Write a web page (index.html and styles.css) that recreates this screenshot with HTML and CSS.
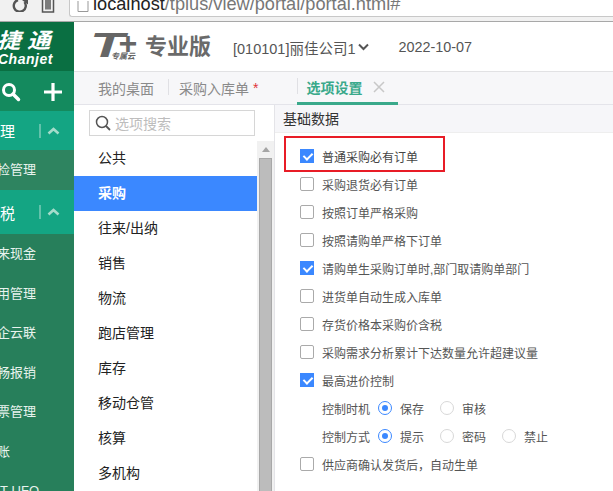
FILE: index.html
```html
<!DOCTYPE html>
<html lang="zh-CN">
<head>
    <meta charset="UTF-8">
    <title>T+ 选项设置</title>
    <link rel="stylesheet" href="styles.css">
</head>
<body>
    <div class="browser-bar">
        <svg class="reload-icon" width="16" height="12" viewBox="0 0 16 12"><path d="M12.500 -1.500 A6 6 0 1 1 6 -3.500" fill="none" stroke="#555" stroke-width="2.400" transform="translate(0 3.500)"/><path d="M10 0h6v4.500z" fill="#555"/></svg>
        <svg class="trash-icon" width="14" height="13" viewBox="0 0 14 13"><path d="M1.500 0v12h11V0M5 0v9.500M7 0v9.500M9 0v9.500" fill="none" stroke="#555" stroke-width="1.500"/></svg>
        <div class="url-box">
            <svg class="page-icon" width="12" height="11" viewBox="0 0 12 11"><path d="M1 0v10.500h10V0" fill="none" stroke="#999"/></svg>
            <span class="url-host">localhost</span><span class="url-path">/tplus/view/portal/portal.html#</span>
        </div>
    </div>
    <div class="app">
        <aside class="sidebar">
            <div class="brand">
                <div class="brand-cn">捷 通</div>
                <div class="brand-en">Chanjet</div>
            </div>
            <div class="tools">
                <svg width="20" height="20" viewBox="0 0 20 20"><circle cx="8" cy="8" r="5.500" fill="none" stroke="#fff" stroke-width="3"/><path d="M12 12l5.500 5.500" stroke="#fff" stroke-width="3.500" stroke-linecap="round"/></svg>
                <svg width="20" height="20" viewBox="0 0 20 20"><path d="M10 1v18M1 10h18" stroke="#fff" stroke-width="3.200"/></svg>
            </div>
            <div class="group group-first"><span class="group-name">理</span><span class="group-toggle"><svg width="13" height="8" viewBox="0 0 13 8"><path d="M1.500 6.500l5-4.500 5 4.500" fill="none" stroke="#a5dccb" stroke-width="2.600"/></svg></span></div>
            <div class="side-item side-item-dark">检管理</div>
            <div class="group"><span class="group-name">税</span><span class="group-toggle"><svg width="13" height="8" viewBox="0 0 13 8"><path d="M1.500 6.500l5-4.500 5 4.500" fill="none" stroke="#a5dccb" stroke-width="2.600"/></svg></span></div>
            <div class="side-item">来现金</div>
            <div class="side-item">用管理</div>
            <div class="side-item">企云联</div>
            <div class="side-item">畅报销</div>
            <div class="side-item">票管理</div>
            <div class="side-item">账</div>
            <div class="side-item side-item-last">T-UFO</div>
        </aside>
        <main class="main">
            <header class="top-bar">
                <div class="logo">
                    <span class="logo-t">T</span><span class="logo-plus">+</span>
                    <span class="logo-sub">专属云</span>
                </div>
                <span class="edition">专业版</span>
                <span class="company">[010101]丽佳公司1</span>
                <svg class="company-arrow" width="11" height="8" viewBox="0 0 11 8"><path d="M1 1.500l4.500 4.500 4.500-4.500" fill="none" stroke="#555" stroke-width="2"/></svg>
                <span class="date">2022-10-07</span>
            </header>
            <nav class="tabs">
                <span class="tab">我的桌面</span>
                <span class="tab tab-second">采购入库单 <em>*</em></span>
                <span class="tab tab-active">选项设置<svg width="12" height="12" viewBox="0 0 12 12"><path d="M1 1l10 10M11 1L1 11" stroke="#c8c8c8" stroke-width="1.500"/></svg></span>
            </nav>
            <div class="content">
                <section class="categories">
                    <div class="search-box">
                        <svg width="16" height="16" viewBox="0 0 16 16"><circle cx="7" cy="7" r="5.500" fill="none" stroke="#555" stroke-width="1.500"/><path d="M11 11l4 4" stroke="#555" stroke-width="1.800"/></svg>
                        <span>选项搜索</span>
                    </div>
                    <div class="category-wrap">
                        <ul class="category-list">
                            <li>公共</li>
                            <li class="active">采购</li>
                            <li>往来/出纳</li>
                            <li>销售</li>
                            <li>物流</li>
                            <li>跑店管理</li>
                            <li>库存</li>
                            <li>移动仓管</li>
                            <li>核算</li>
                            <li>多机构</li>
                        </ul>
                    </div>
                    <div class="scrollbar">
                        <div class="scroll-up"></div>
                        <div class="scroll-thumb"></div>
                    </div>
                </section>
                <section class="options">
                    <h2 class="options-title">基础数据</h2>
                    <div class="option-list">
                        <label class="option option-marked"><i class="check on"></i>普通采购必有订单</label>
                        <label class="option"><i class="check"></i>采购退货必有订单</label>
                        <label class="option"><i class="check"></i>按照订单严格采购</label>
                        <label class="option"><i class="check"></i>按照请购单严格下订单</label>
                        <label class="option"><i class="check on"></i>请购单生采购订单时,部门取请购单部门</label>
                        <label class="option"><i class="check"></i>进货单自动生成入库单</label>
                        <label class="option"><i class="check"></i>存货价格本采购价含税</label>
                        <label class="option"><i class="check"></i>采购需求分析累计下达数量允许超建议量</label>
                        <label class="option"><i class="check on"></i>最高进价控制</label>
                        <div class="option option-sub">
                            <span class="sub-label">控制时机</span>
                            <span class="radio on"></span><span class="radio-text">保存</span>
                            <span class="radio"></span><span class="radio-text">审核</span>
                        </div>
                        <div class="option option-sub">
                            <span class="sub-label">控制方式</span>
                            <span class="radio on"></span><span class="radio-text">提示</span>
                            <span class="radio"></span><span class="radio-text">密码</span>
                            <span class="radio"></span><span class="radio-text">禁止</span>
                        </div>
                        <label class="option"><i class="check"></i>供应商确认发货后，自动生单</label>
                    </div>
                </section>
            </div>
        </main>
    </div>
</body>
</html>
```

FILE: styles.css
```css
* {
    margin: 0;
    padding: 0;
    box-sizing: border-box;
}

html, body {
    height: 491px;
    overflow: hidden;
}

body {
    width: 613px;
    font-family: "Liberation Sans", "Noto Sans CJK SC", sans-serif;
    font-size: 12px;
    color: #333;
    background-color: white;
}

.browser-bar {
    height: 22px;
    display: flex;
    align-items: flex-start;
    background-color: #f1f1f1;
    border-bottom: 1px solid #a8a8a8;
    overflow: hidden;
}

.reload-icon {
    margin-left: 12px;
}

.trash-icon {
    margin-left: 13px;
}

.url-box {
    flex: 1;
    height: 17px;
    margin-left: 14px;
    display: flex;
    align-items: flex-end;
    background-color: white;
    border: 1px solid #c8c8c8;
    border-top: none;
    border-right: none;
    border-radius: 0 0 0 3px;
    font-size: 18.200px;
    line-height: 18px;
    padding-left: 7px;
    overflow: hidden;
}

.page-icon {
    margin-right: 4px;
    margin-bottom: 4px;
    flex-shrink: 0;
}

.url-host {
    color: #222;
    margin-bottom: 3px;
}

.url-path {
    color: #777;
    margin-bottom: 3px;
}

.app {
    display: flex;
    height: 469px;
}

.sidebar {
    width: 74px;
    flex-shrink: 0;
    background-color: #277f5b;
    color: #e8f3ee;
    overflow: hidden;
}

.brand {
    height: 49px;
    background-color: #0a6f42;
    color: white;
    font-style: italic;
    font-weight: bold;
    white-space: nowrap;
    padding-top: 8px;
}

.brand-cn {
    font-size: 21px;
    line-height: 22px;
    margin-left: -3px;
    transform: scaleX(1.120);
    transform-origin: left;
}

.brand-en {
    font-size: 14px;
    line-height: 14px;
    letter-spacing: 0.500px;
    margin-left: -2px;
}

.tools {
    height: 40px;
    background-color: #148a5e;
    display: flex;
    align-items: center;
    gap: 22px;
    padding-top: 2px;
}

.tools svg:first-child {
    margin-left: 1px;
}

.group {
    height: 44px;
    background-color: #14a583;
    color: white;
    display: flex;
    align-items: center;
    font-size: 15px;
}

.group-first {
    height: 39px;
}

.group-name {
    width: 39px;
    white-space: nowrap;
}

.group-toggle {
    display: flex;
    align-items: center;
    height: 14px;
    padding-left: 6px;
    border-left: 2px solid #62c2ab;
}

.side-item {
    height: 39.500px;
    line-height: 39px;
    white-space: nowrap;
    font-size: 13px;
    text-indent: -3px;
}

.side-item-dark {
    height: 40px;
    line-height: 40px;
    background-color: #2e8460;
}

.side-item-last {
    text-indent: 0;
}

.main {
    flex: 1;
    min-width: 0;
    display: flex;
    flex-direction: column;
}

.top-bar {
    height: 50px;
    flex-shrink: 0;
    display: flex;
    align-items: center;
    padding-left: 20px;
    border-bottom: 1px solid #e2e2e4;
    color: #555;
    white-space: nowrap;
}

.logo {
    width: 51px;
    height: 30px;
    position: relative;
    color: #666;
    font-weight: bold;
    font-style: italic;
}

.logo-t {
    position: absolute;
    left: -4px;
    top: -4px;
    font-size: 35px;
    line-height: 34px;
    transform: scaleX(1.600);
    transform-origin: left;
}

.logo-plus {
    position: absolute;
    left: 24px;
    top: -5px;
    font-size: 32px;
    line-height: 32px;
}

.logo-sub {
    position: absolute;
    left: 17px;
    top: 20px;
    font-size: 8px;
    line-height: 9px;
}

.edition {
    font-size: 22px;
    line-height: 26px;
    font-weight: bold;
    color: #6a6a6a;
    width: 88px;
}

.company {
    font-size: 14.500px;
    margin-top: 1px;
}

.company-arrow {
    margin-left: 2px;
    margin-top: 1px;
}

.date {
    font-size: 14.400px;
    margin-left: 30px;
    margin-top: 1px;
}

.tabs {
    height: 33px;
    flex-shrink: 0;
    display: flex;
    align-items: stretch;
    background-color: #f7f7f9;
    border-bottom: 1px solid #e4e4ea;
    padding-left: 24px;
    color: #8a8a8a;
    white-space: nowrap;
    font-size: 14px;
}

.tab {
    display: flex;
    align-items: center;
    gap: 4px;
}

.tab-second {
    margin-left: 14px;
    padding-left: 11px;
    position: relative;
}

.tab em {
    color: #e0343a;
    font-style: normal;
}

.tab-second::before {
    content: "";
    position: absolute;
    left: 0;
    top: 7px;
    height: 16px;
    border-left: 1px solid #e0e0e4;
}

.tab-active {
    margin-left: 39px;
    width: 101px;
    padding-left: 9px;
    gap: 11px;
    color: #3aa98b;
    font-weight: bold;
    border-bottom: 3px solid #3aa98b;
    height: 33px;
    position: relative;
}

.tab-active::before {
    content: "";
    position: absolute;
    left: 0;
    top: 6px;
    height: 16px;
    border-left: 1px solid #e0e0e4;
}

.content {
    flex: 1;
    display: flex;
    min-height: 0;
}

.categories {
    width: 201px;
    flex-shrink: 0;
    border-right: 1px solid #e4e4e8;
    position: relative;
    overflow: hidden;
}

.search-box {
    width: 166px;
    height: 26px;
    margin: 5px 0 0 15px;
    border: 1px solid #d6d6d6;
    display: flex;
    align-items: center;
    gap: 4px;
    padding-left: 5px;
    color: #bdbdbd;
    font-size: 14px;
}

.category-wrap {
    padding-top: 5px;
}

.category-list {
    width: 183px;
    list-style: none;
    color: #222;
    font-size: 14px;
}

.category-list li {
    height: 35px;
    line-height: 35px;
    padding-left: 24px;
    white-space: nowrap;
}

.category-list li.active {
    background-color: #3b88ff;
    color: white;
    font-weight: bold;
}

.scrollbar {
    position: absolute;
    left: 183px;
    top: 36px;
    bottom: 0;
    width: 17px;
    background-color: #f1f1f1;
}

.scroll-up {
    height: 17px;
    position: relative;
}

.scroll-up::after {
    content: "";
    position: absolute;
    left: 5px;
    top: 6px;
    border: 4px solid transparent;
    border-top: none;
    border-bottom: 5px solid #a5a5a5;
}

.scroll-thumb {
    width: 13px;
    height: 400px;
    margin-left: 2px;
    background-color: #bcbcbc;
    border: 1px solid #a8a8a8;
}

.options {
    flex: 1;
    min-width: 0;
}

.options-title {
    height: 28px;
    line-height: 28px;
    padding-left: 8px;
    font-size: 14px;
    font-weight: normal;
    color: #333;
    background-color: #f6f6f9;
    border-bottom: 1px solid #eee;
}

.option-list {
    padding: 9px 0 0 25px;
}

.option {
    height: 28px;
    display: flex;
    align-items: center;
    font-size: 12px;
    color: #555;
    white-space: nowrap;
}

.option-marked {
    position: relative;
    color: #444;
}

.option-marked::after {
    content: "";
    position: absolute;
    left: -16px;
    top: -6px;
    width: 157px;
    height: 32px;
    border: 2px solid #e81c26;
}

.check {
    width: 14px;
    height: 14px;
    flex-shrink: 0;
    margin-right: 8px;
    border: 1px solid #aaa;
    border-radius: 2px;
    position: relative;
}

.check.on {
    background-color: #3b88ff;
    border-color: #3b88ff;
    border-radius: 0;
}

.check.on::after {
    content: "";
    position: absolute;
    left: 3.500px;
    top: 1px;
    width: 4px;
    height: 7px;
    border: solid white;
    border-width: 0 2px 2px 0;
    transform: rotate(45deg);
}

.option-sub {
    padding-left: 22px;
}

.sub-label {
    width: 56px;
}

.radio {
    width: 14px;
    height: 14px;
    margin-right: 8px;
    border: 1px solid #d8d8d8;
    border-radius: 50%;
    position: relative;
    flex-shrink: 0;
}

.radio.on {
    border-color: #3b88ff;
}

.radio.on::after {
    content: "";
    position: absolute;
    left: 3px;
    top: 3px;
    width: 6px;
    height: 6px;
    border-radius: 50%;
    background-color: #3b88ff;
}

.radio-text {
    width: 40px;
}
```
